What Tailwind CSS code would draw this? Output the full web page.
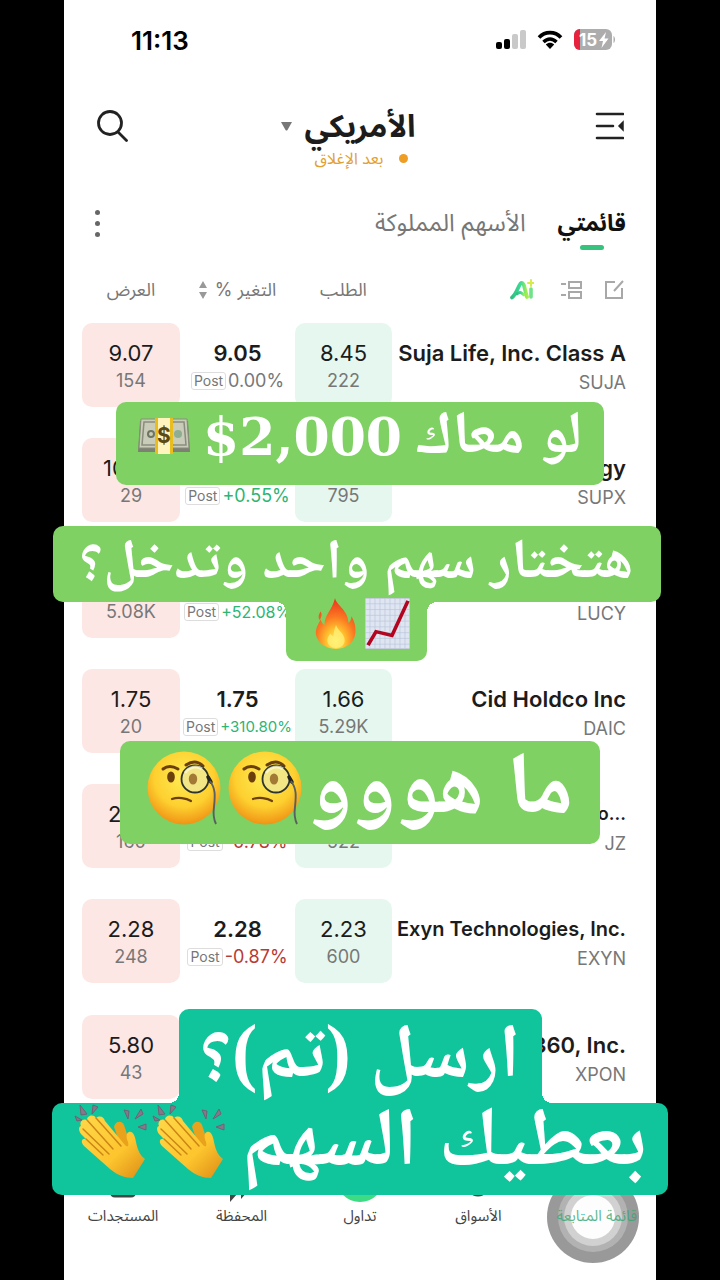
<!DOCTYPE html>
<html lang="ar" dir="rtl">
<head>
    <meta charset="UTF-8">
    <meta name="viewport" content="width=device-width, initial-scale=1.0">
    <title>قائمتي</title>
    <script src="https://cdn.jsdelivr.net/npm/@tailwindcss/browser@4"></script>
</head>
<body class="bg-black font-['Inter','Noto_Sans_Arabic','DejaVu_Sans',sans-serif] text-[#1c1c1c]">

    <!-- Emoji drawings -->
    <svg class="absolute w-0 h-0" aria-hidden="true">
        <defs>
            <radialGradient id="faceFill" cx="50%" cy="35%" r="68%">
                <stop offset="0" stop-color="#ffec55"/><stop offset="0.6" stop-color="#fdd02f"/><stop offset="1" stop-color="#ee8c12"/>
            </radialGradient>
            <radialGradient id="flameFill" cx="50%" cy="85%" r="80%">
                <stop offset="0" stop-color="#fff36b"/><stop offset="0.3" stop-color="#ffc02e"/><stop offset="0.6" stop-color="#fb7a22"/><stop offset="1" stop-color="#ec3b1c"/>
            </radialGradient>
            <linearGradient id="handFill" x1="0" y1="0" x2="1" y2="1">
                <stop offset="0" stop-color="#ffd84a"/><stop offset="0.6" stop-color="#fdc52e"/><stop offset="1" stop-color="#dc8b14"/>
            </linearGradient>
            <linearGradient id="aiFill" x1="0" y1="0" x2="1" y2="0">
                <stop offset="0" stop-color="#2fbf83"/><stop offset="0.6" stop-color="#3fdc98"/><stop offset="1" stop-color="#a8ee4a"/>
            </linearGradient>
        </defs>
        <symbol id="monocle" viewBox="0 0 76 76">
            <circle cx="37" cy="37" r="36.500" fill="url(#faceFill)"/>
            <path d="M16 18c5-4 10-3 15 0" fill="none" stroke="#6b3f0c" stroke-width="3" stroke-linecap="round"/>
            <path d="M39 14c6-4 12-4 17 1" fill="none" stroke="#6b3f0c" stroke-width="3" stroke-linecap="round"/>
            <ellipse cx="24" cy="26" rx="3.800" ry="5.500" fill="#6b3f0c"/>
            <circle cx="48" cy="28" r="13.500" fill="#f3e684" stroke="#2d3430" stroke-width="1.800"/>
            <ellipse cx="46" cy="28" rx="4.200" ry="5.500" fill="#a27a35"/>
            <path d="M38 22c4-6 12-8 17-4" fill="none" stroke="#fffbd0" stroke-width="3" opacity=".7"/>
            <path d="M61 26l3 5" stroke="#222" stroke-width="3.500" stroke-linecap="round"/>
            <path d="M63 30c6 8 5 16 4 26-1 7-1 11 2 17" fill="none" stroke="#59605f" stroke-width="1.900"/>
            <path d="M25 48c6-2 14-1 19 2" fill="none" stroke="#6b3f0c" stroke-width="2.200" stroke-linecap="round"/>
        </symbol>
        <symbol id="clap" viewBox="0 0 74 78">
            <g fill="#85788b" stroke="#6d6474" stroke-width="1">
                <path d="M6 2l7 9-6 1z"/><path d="M19 2l5 2-6 7z"/><path d="M1 13l7 4-5 1z"/>
                <path d="M50 7l5 1-1 8z"/><path d="M67 6l2 5-8 5z"/><path d="M72 21v6l-8-3z"/>
            </g>
            <path d="M40 24c1-6 8-7 10-2l4 12 6 14-10 4z" fill="#e8a21c"/>
            <path d="M7 23c-2-4 2-8 6-6 0-5 7-6 9-2 4-3 8-1 9 3l20 24c3 3 4 1 3-3-2-5-2-9 1-10 4-1 6 4 7 10 2 9 4 13 9 17L59 75c-8 0-16-3-23-9L10 43c-4-4-2-8 2-7L7 31c-3-4-2-8 0-8z" fill="url(#handFill)"/>
            <path d="M13 17l26 29M22 15l25 28M9 26l26 25M12 36l17 16" fill="none" stroke="#cc8617" stroke-width="1.500" stroke-linecap="round"/>
        </symbol>
    </svg>

    <div class="relative mx-16 flex min-h-screen flex-col bg-white">

        <!-- Status bar -->
        <div dir="ltr" class="flex h-20 items-center justify-between pl-[67px] pr-10">
            <span class="text-[26px] font-semibold text-black">11:13</span>
            <div class="flex items-center gap-[11px]">
                <svg class="h-5 w-[30px]" viewBox="0 0 30 20">
                    <rect x="0" y="12" width="6" height="7" rx="2"/><rect x="8" y="9" width="6" height="10" rx="2"/>
                    <rect x="16" y="4" width="6" height="15" rx="2" fill="#c9c9c9"/><rect x="24" y="0" width="6" height="19" rx="2" fill="#c9c9c9"/>
                </svg>
                <svg class="h-5 w-[26px]" viewBox="0 0 26 20">
                    <path d="M2 7.500C8 1 18 1 24 7.500" fill="none" stroke="#000" stroke-width="3.600"/>
                    <path d="M6.500 12c4-4 9-4 13 0" fill="none" stroke="#000" stroke-width="3.400"/>
                    <path d="M13 19l-4.200-4.500c2.500-2.200 5.900-2.200 8.400 0z"/>
                </svg>
                <svg class="h-[22px] w-[42px]" viewBox="0 0 42 22" role="img" aria-label="15%">
                    <clipPath id="cell"><rect x="0" y="0" width="38" height="21" rx="6"/></clipPath>
                    <g clip-path="url(#cell)"><rect width="38" height="21" fill="#adadad"/><rect width="6" height="21" fill="#e8213f"/></g>
                    <path d="M39.500 7c2 1 2 6 0 7z" fill="#adadad"/>
                    <text x="5" y="17" font-size="17" font-weight="700" fill="#fff" direction="ltr">15</text>
                    <path d="M32 3l-7 9h4l-1.500 7 7-9.500h-4z" fill="#fff"/>
                </svg>
            </div>
        </div>

        <!-- Header -->
        <header class="flex h-[100px] items-start justify-between pl-8 pr-8">
            <button aria-label="القائمة" class="mt-8">
                <svg class="h-7 w-[29px]" viewBox="0 0 29 28" fill="none" stroke="#222" stroke-width="2.600" stroke-linecap="round">
                    <path d="M2 2h26M2 14h16M2 26h26"/><path d="M28 10l-4 4 4 4z" fill="#222" stroke-width="1.500"/>
                </svg>
            </button>
            <div class="flex flex-col items-center">
                <button class="mt-6 mr-7 flex h-11 items-center gap-3 text-[31px] font-bold">
                    الأمريكي
                    <svg class="h-[9px] w-[13px]" viewBox="0 0 13 9"><path d="M1 0h11L7.500 8q-1 1-2 0z" fill="#777"/></svg>
                </button>
                <div class="flex h-5 items-center gap-4 text-base text-[#e2a02f]">
                    <span class="size-[9px] rounded-full bg-[#ee9d25]"></span>بعد الإغلاق
                </div>
            </div>
            <button aria-label="بحث" class="mt-[30px]">
                <svg class="size-8" viewBox="0 0 32 32" fill="none" stroke="#222" stroke-width="2.800" stroke-linecap="round">
                    <circle cx="14" cy="13" r="11.500"/><path d="M22 22l8.500 8.500"/>
                </svg>
            </button>
        </header>

        <!-- Tabs -->
        <div class="flex h-[77px] items-start pl-[30px] pr-[30px] pt-[23px]">
            <button class="relative h-10 text-[23px] font-bold text-[#111]">قائمتي
                <span class="absolute -bottom-[7px] left-1/2 h-[5px] w-6 -translate-x-1/2 rounded-sm bg-[#35c37d]"></span>
            </button>
            <button class="mr-8 h-10 text-2xl text-[#777]">الأسهم المملوكة</button>
            <button aria-label="المزيد" class="mr-auto mt-[7px] flex h-[27px] w-[6px] flex-col justify-between">
                <span class="size-[5px] rounded-full bg-[#666]"></span><span class="size-[5px] rounded-full bg-[#666]"></span><span class="size-[5px] rounded-full bg-[#666]"></span>
            </button>
        </div>

        <!-- Watchlist -->
        <div class="pl-[18px] pr-[30px]">
            <table class="h-[873px] w-full table-fixed">
                <colgroup><col><col class="w-[97px]"><col class="w-[115px]"><col class="w-[98px]"></colgroup>
                <thead>
                    <tr class="h-[66px] text-lg text-[#777]">
                        <th class="p-0">
                            <div class="flex items-center gap-[22px] pr-[2px]">
                                <button aria-label="تعديل"><svg class="size-5" viewBox="0 0 20 20" fill="none" stroke="#a8a8a8" stroke-width="2"><path d="M11 2H2v16h16V8M10 11l9-10"/></svg></button>
                                <button aria-label="عرض"><svg class="h-5 w-[22px]" viewBox="0 0 22 20" fill="none" stroke="#a8a8a8" stroke-width="2"><path d="M9 2h12v6H9zM9 12h12v6H9zM1 4h5M1 15h5"/></svg></button>
                                <button aria-label="Ai" class="mr-1"><svg class="h-[22px] w-6" viewBox="0 0 24 22" fill="none" stroke="url(#aiFill)" stroke-linecap="round" stroke-linejoin="round">
                                    <path d="M2 18.500C6 16 8 8 10.500 4.500c1.500-1.500 3 0 3.500 2l3 11.500" stroke-width="3.800"/><path d="M7 15c3-3 5-1 7 1" stroke-width="2.800"/><path d="M21 10v8" stroke-width="3.600" stroke="#6fe38a"/><path d="M21 1v6M18 4h6" stroke="#d9ea4b" stroke-width="2"/>
                                </svg></button>
                            </div>
                        </th>
                        <th class="p-0 font-normal">الطلب</th>
                        <th class="p-0 font-normal">
                            <button class="inline-flex items-center gap-2">التغير %
                                <svg class="h-[18px] w-2" viewBox="0 0 8 18" fill="#999"><path d="M4 0l4 7H0zM4 18l4-7H0z"/></svg>
                            </button>
                        </th>
                        <th class="p-0 font-normal">العرض</th>
                    </tr>
                </thead>
                <tbody id="rows" class="text-center align-top"></tbody>
            </table>
        </div>

        <!-- Floating touch button -->
        <button aria-label="AssistiveTouch" class="absolute right-[17px] top-[1171px] flex size-[92px] items-center justify-center rounded-full bg-[#777]/75">
            <span class="flex size-[70px] items-center justify-center rounded-full bg-white/25">
                <span class="flex size-[58px] items-center justify-center rounded-full bg-white/40">
                    <span class="size-11 rounded-full bg-white/95"></span>
                </span>
            </span>
        </button>

        <!-- Bottom bar -->
        <nav class="mt-8 flex whitespace-nowrap text-center text-[15px] leading-5 text-[#444]">
            <a href="#" class="relative flex flex-1 flex-col items-center gap-2 text-[#35a873]/80">
                <svg class="size-9" viewBox="0 0 36 36" fill="#35a873"><path d="M18 33l-5-6h10z"/></svg>قائمة المتابعة
            </a>
            <a href="#" class="flex flex-1 flex-col items-center gap-2">
                <svg class="size-9" viewBox="0 0 36 36" fill="none" stroke="#444" stroke-width="3"><circle cx="18" cy="22" r="11"/></svg>الأسواق
            </a>
            <a href="#" class="flex flex-1 flex-col items-center gap-2">
                <svg class="size-9 overflow-visible" viewBox="0 0 36 36"><circle cx="18" cy="16" r="24" fill="#3ddc84"/></svg>تداول
            </a>
            <a href="#" class="flex flex-1 flex-col items-center gap-2">
                <svg class="size-9 overflow-visible" viewBox="0 0 36 36" fill="#444"><path d="M6 22h8v9l-8 9zM17 22h8v6l-8 9z"/></svg>المحفظة
            </a>
            <a href="#" class="flex flex-1 flex-col items-center gap-2">
                <svg class="size-9" viewBox="0 0 36 36" fill="none" stroke="#444" stroke-width="3"><rect x="6" y="8" width="24" height="26" rx="4"/></svg>المستجدات
            </a>
        </nav>
    </div>

    <!-- Captions over the recording -->
    <div class="absolute inset-x-0 top-0 font-['Liberation_Serif','Noto_Naskh_Arabic','DejaVu_Sans',serif] font-bold text-white">
        <div class="absolute inset-x-0 top-[402px] flex justify-center">
            <p class="flex h-[83px] w-[488px] items-start justify-between rounded-[10px] bg-[#7fd163] px-[22px] leading-[62px]">
                <span class="whitespace-nowrap text-[60px]">لو معاك</span>
                <bdi dir="ltr" class="pt-1 font-['DejaVu_Serif',serif] text-[52px]">$2,000</bdi>
                <svg class="mt-[15px] h-[38px] w-[52px]" viewBox="0 0 52 38" role="img" aria-label="💵">
                    <path d="M2 4h48l2 31H0z" fill="#7d8072"/><path d="M3 2h46l2 29H1z" fill="#c9ccb8" stroke="#8a8d7c"/>
                    <path d="M6 5h40l2 23H4z" fill="none" stroke="#8a8d7c" stroke-width="1.500"/>
                    <circle cx="13" cy="17" r="3" fill="none" stroke="#6d7565" stroke-width="2"/><circle cx="40" cy="17" r="4" fill="#8fae91"/>
                    <path d="M17 1h18v36H17z" fill="#e9bd1d"/><path d="M20 1h12v36H20z" fill="#fff4bd"/>
                    <text x="26" y="26" text-anchor="middle" font-size="21" font-family="Inter" font-weight="700" fill="#5c4a14">$</text>
                </svg>
            </p>
        </div>

        <div class="absolute inset-x-0 top-[526px] flex flex-col items-center pr-[7px]">
            <p class="h-[76px] w-[608px] whitespace-nowrap rounded-[10px] bg-[#7fd163] text-center text-[56px] leading-[66px]">هتختار سهم واحد وتدخل؟</p>
            <div class="relative -mt-1 flex h-[63px] w-[141px] justify-center gap-2 rounded-b-[10px] bg-[#7fd163] pl-3">
                <span class="absolute -right-[10px] top-1 size-[10px] bg-[radial-gradient(circle_at_100%_100%,transparent_10px,#7fd163_10px)]"></span>
                <span class="absolute -left-[10px] top-1 size-[10px] bg-[radial-gradient(circle_at_0%_100%,transparent_10px,#7fd163_10px)]"></span>
                <svg class="h-[51px] w-[45px]" viewBox="0 0 45 53" preserveAspectRatio="none" role="img" aria-label="📈">
                    <path d="M0 0h45v53H0z" fill="#dfe6f2" stroke="#aab4bf"/>
                    <path d="M5 0v53M10 0v53M15 0v53M20 0v53M25 0v53M30 0v53M35 0v53M40 0v53M0 6h45M0 12h45M0 18h45M0 24h45M0 30h45M0 36h45M0 42h45M0 48h45" stroke="#b8c6da" stroke-width="0.700"/>
                    <path d="M3 49l8-14 16 4L43 3" fill="none" stroke="#b3051f" stroke-width="3.600"/>
                </svg>
                <svg class="h-[51px] w-[42px]" viewBox="0 0 42 53" role="img" aria-label="🔥">
                    <path d="M20 0c1 7 14 13 14 26 2-2 3-4 3-7 3 5 5 11 4 18-1 9-9 16-20 16S1 46 0 37c0-7 3-10 5-15 1 3 2 5 4 6 0-11 8-15 11-28zM5 14c2 3 1 6-1 9-2-3-1-6 1-9z" fill="url(#flameFill)"/>
                    <path d="M21 28c2 6 9 9 9 16 0 5-4 8-9 8s-9-3-9-8c0-3 2-5 3-7 1 2 2 2 3 3 1-4 1-8 3-12z" fill="#fff27a" opacity=".75"/>
                </svg>
            </div>
        </div>

        <div class="absolute inset-x-0 top-[741px] flex justify-center">
            <p class="flex h-[103px] w-[480px] items-start justify-center gap-[5px] rounded-[10px] bg-[#7fd163] text-[88px] leading-[86px]">
                <span class="whitespace-nowrap">ما هووو</span>
                <svg class="mt-[10px] size-[76px]" role="img" aria-label="🧐"><use href="#monocle"/></svg>
                <svg class="mt-[10px] size-[76px]" role="img" aria-label="🧐"><use href="#monocle"/></svg>
            </p>
        </div>

        <div class="absolute inset-x-0 top-[1009px] flex flex-col items-center">
            <p class="relative h-[94px] w-[363px] whitespace-nowrap rounded-t-[10px] bg-[#10c49c] text-center text-[76px] leading-[84px]">ارسل (تم)؟
                <span class="absolute -right-[10px] bottom-0 size-[10px] bg-[radial-gradient(circle_at_100%_0%,transparent_10px,#10c49c_10px)]"></span>
                <span class="absolute -left-[10px] bottom-0 size-[10px] bg-[radial-gradient(circle_at_0%_0%,transparent_10px,#10c49c_10px)]"></span>
            </p>
            <p class="flex h-[92px] w-[616px] items-start justify-center gap-1 rounded-[10px] bg-[#10c49c] text-[82px] leading-[70px]">
                <span class="ml-3 whitespace-nowrap">بعطيك السهم</span>
                <svg class="h-[78px] w-[74px]" role="img" aria-label="👏"><use href="#clap"/></svg>
                <svg class="h-[78px] w-[74px]" role="img" aria-label="👏"><use href="#clap"/></svg>
            </p>
        </div>
    </div>

    <script>
        const stocks = [
            { name: 'Suja Life, Inc. Class A', symbol: 'SUJA', bid: '8.45', bidSize: '222', last: '9.05', change: '0.00%', ask: '9.07', askSize: '154' },
            { name: 'SuperX AI Technology', symbol: 'SUPX', bid: '', bidSize: '795', last: '', change: '+0.55%', ask: '10.00', askSize: '29' },
            { name: '', symbol: 'LUCY', bid: '', bidSize: '', last: '', change: '+52.08%', ask: '', askSize: '5.08K' },
            { name: 'Cid Holdco Inc', symbol: 'DAIC', bid: '1.66', bidSize: '5.29K', last: '1.75', change: '+310.80%', ask: '1.75', askSize: '20' },
            { name: 'Jianzhi Education Techno...', symbol: 'JZ', bid: '', bidSize: '522', last: '', change: '-0.78%', ask: '2.55', askSize: '160' },
            { name: 'Exyn Technologies, Inc.', symbol: 'EXYN', bid: '2.23', bidSize: '600', last: '2.28', change: '-0.87%', ask: '2.28', askSize: '248' },
            { name: 'Expion360, Inc.', symbol: 'XPON', bid: '', bidSize: '', last: '', change: '', ask: '5.80', askSize: '43' },
        ];

        function nameSize(name) {
            if (name.length > 25) return 'text-lg';
            return name === 'Exyn Technologies, Inc.' ? 'text-[20px]' : 'text-[22px]';
        }

        function changeStyle(change) {
            const color = change[0] === '+' ? 'text-[#2db573]' : change[0] === '-' ? 'text-[#b83a34]' : 'text-[#777]';
            const size = change.length > 7 ? 'text-[15px]' : change.length > 6 ? 'text-base' : 'text-lg';
            return color + ' ' + size;
        }

        function post(change) {
            if (!change) return '';
            return `<span class="h-[18px] rounded-[3px] border border-[#ddd] px-[2px] text-sm leading-4 text-[#777]">Post</span>${change}`;
        }

        document.getElementById('rows').innerHTML = stocks.map(s => `
            <tr>
                <td class="p-0" dir="ltr">
                    <div class="flex h-[84px] flex-col items-end pt-4">
                        <div class="h-7 whitespace-nowrap leading-7 font-semibold ${nameSize(s.name)}">${s.name}</div>
                        <div class="mt-[2px] h-7 text-lg text-[#777]">${s.symbol}</div>
                    </div>
                </td>
                <td class="p-0"><div class="h-[84px] rounded-[10px] bg-[#e5f7ef] pt-4"><div class="h-7 text-[22px] leading-7">${s.bid}</div><div class="h-7 text-lg text-[#777]">${s.bidSize}</div></div></td>
                <td class="p-0" dir="ltr">
                    <div class="pt-4"><div class="h-7 text-[22px] leading-7 font-semibold">${s.last}</div>
                    <div class="flex h-7 items-center justify-center gap-[2px] whitespace-nowrap ${changeStyle(s.change)}">${post(s.change)}</div></div>
                </td>
                <td class="p-0"><div class="h-[84px] rounded-[10px] bg-[#fce7e5] pt-4"><div class="h-7 text-[22px] leading-7">${s.ask}</div><div class="h-7 text-lg text-[#777]">${s.askSize}</div></div></td>
            </tr>`).join('');
    </script>
</body>
</html>
